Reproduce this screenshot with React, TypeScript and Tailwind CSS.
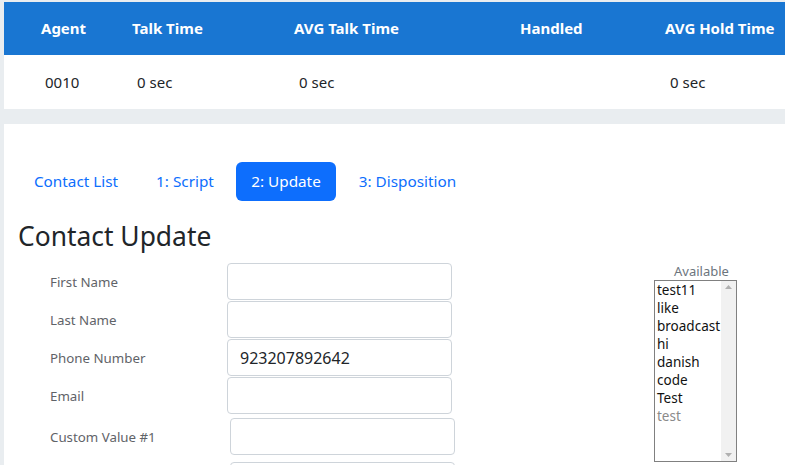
import React from 'react';

const font = { fontFamily: '"Noto Sans", "Open Sans", sans-serif' };

const stats = [
    { label: 'Agent', value: '0010', width: 'w-[91px]', valuePad: 'pl-[20px]' },
    { label: 'Talk Time', value: '0 sec', width: 'w-[162px]', valuePad: 'pl-[21px]' },
    { label: 'AVG Talk Time', value: '0 sec', width: 'w-[226px]', valuePad: 'pl-[21px]' },
    { label: 'Handled', value: '', width: 'w-[145px]', valuePad: 'pl-[21px]' },
    { label: 'AVG Hold Time', value: '0 sec', width: 'w-[160px]', valuePad: 'pl-[21px]' },
];

const tabs = [
    { label: 'Contact List', width: 'w-[116px]' },
    { label: '1: Script', width: 'w-[88px]' },
    { label: '2: Update', width: 'w-[100px]' },
    { label: '3: Disposition', width: 'w-[129px]' },
];

const fields = [
    { label: 'First Name', value: '' },
    { label: 'Last Name', value: '' },
    { label: 'Phone Number', value: '923207892642' },
    { label: 'Email', value: '' },
];

const available = ['test11', 'like', 'broadcast', 'hi', 'danish', 'code', 'Test'];

const StatsTable = () => (
    <div className="ml-1 mt-[2px] bg-white w-[800px]">
        <div className="flex h-[53px] items-center bg-[#1976d2] pl-[21px] text-white font-bold text-[15px]">
            {stats.map((s) => (
                <div key={s.label} className={`${s.width} shrink-0 pl-4`}>{s.label}</div>
            ))}
        </div>
        <div className="flex h-[54px] items-center pl-[21px] text-[15px] text-[#212529]">
            {stats.map((s) => (
                <div key={s.label} className={`${s.width} shrink-0 ${s.valuePad}`}>{s.value}</div>
            ))}
        </div>
    </div>
);

const Field = ({ label, value, shifted }: { label: string; value: string; shifted?: boolean }) => (
    <div className={`flex items-center ${shifted ? 'mt-[4px]' : 'mt-[1px] first:mt-0'}`}>
        <label className="w-[177px] shrink-0 pt-[3px] text-[13.3px] text-[#5f6368]">{label}</label>
        <input
            readOnly
            value={value}
            className={`h-[37px] w-[225px] rounded-[4px] border border-[#ced4da] bg-white px-3 text-[16px] text-[#212529] outline-none ${shifted ? 'ml-[3px]' : ''}`}
            style={font}
        />
    </div>
);

export default function App() {
    return (
        <div className="h-[465px] w-[785px] overflow-hidden bg-[#e9edf0]" style={font}>
            <StatsTable />

            <div className="ml-1 mt-[15px] h-[400px] bg-white">
                <nav className="flex gap-[7px] pl-[14px] pt-[38px] text-[15.3px]">
                    {tabs.map((t) => (
                        <span
                            key={t.label}
                            className={`flex h-[39px] ${t.width} items-center justify-center rounded-[6px] ${t.label === '2: Update' ? 'bg-[#0d6efd] text-white' : 'text-[#0d6efd]'}`}
                        >
                            {t.label}
                        </span>
                    ))}
                </nav>

                <h3 className="ml-[14px] mt-[20px] text-[26.4px] leading-[31px] text-[#212529]">Contact Update</h3>

                <div className="mt-[11px] flex items-start pl-[46px]">
                    <div className="flex flex-col">
                        {fields.map((f) => (
                            <Field key={f.label} label={f.label} value={f.value} />
                        ))}
                        <Field label="Custom Value #1" value="" shifted />
                        <div className="ml-[180px] mt-[7px] h-[37px] w-[225px] rounded-[4px] border border-[#ced4da]" />
                    </div>

                    <div className="ml-[199px] flex flex-col">
                        <div className="pl-[20px] text-[13px] leading-[17px] text-[#6c757d]">Available</div>
                        <div className="flex h-[182px] w-[83px] border border-[#808080] bg-white">
                            <ul className="flex-1 pl-[2px] text-[13.5px] leading-[18px] text-[#111]">
                                {available.map((a) => (
                                    <li key={a}>{a}</li>
                                ))}
                                <li className="text-[#8a8a8a]">test</li>
                            </ul>
                            <div className="flex w-[15px] flex-col items-center justify-between bg-[#f1f1f1] py-[4px]">
                                <svg width="7" height="4" viewBox="0 0 7 4"><path d="M0 4 L3.5 0 L7 4 Z" fill="#b0b0b0" /></svg>
                                <svg width="7" height="4" viewBox="0 0 7 4"><path d="M0 0 L3.5 4 L7 0 Z" fill="#b0b0b0" /></svg>
                            </div>
                        </div>
                    </div>
                </div>
            </div>
        </div>
    );
}
